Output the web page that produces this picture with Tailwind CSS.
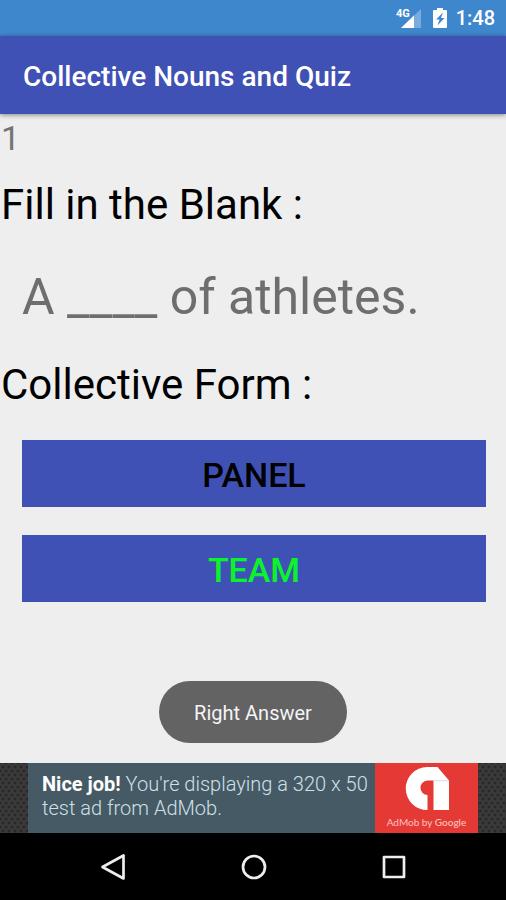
<!DOCTYPE html>
<html lang="en">
<head>
<meta charset="utf-8">
<meta name="viewport" content="width=device-width, initial-scale=1">
<title>Collective Nouns and Quiz</title>
<script src="https://cdn.jsdelivr.net/npm/@tailwindcss/browser@4"></script>
</head>
<body class="flex min-h-screen flex-col bg-[#eeeeee] font-['Roboto',sans-serif] text-black">
  <div class="flex h-9 items-center justify-end bg-[#3f87cd] pr-[11px] text-white">
    <svg class="h-7 w-7" viewBox="0 0 28 28" role="img" aria-label="4G signal">
      <path d="M25 5v19H5z" fill="#fff" fill-opacity=".3"/>
      <path d="M18 11.500V24H5z" fill="#fff"/>
      <text x="0" y="13" fill="#fff" font-family="Roboto" font-size="11" font-weight="700">4G</text>
    </svg>
    <svg class="ml-2 h-5 w-4" viewBox="0 0 16 20" role="img" aria-label="Battery charging">
      <path d="M5 0h6v2h3q1 0 1 1v16q0 1-1 1H2q-1 0-1-1V3q0-1 1-1h3z" fill="#fff"/>
      <path d="M11 4.500 4 11.500h3.500L5.500 17.500l7-7.500H9z" fill="#3f87cd"/>
    </svg>
    <time class="ml-2 text-[20px] leading-6 font-medium">1:48</time>
  </div>
  <header class="z-10 flex h-[78px] items-center bg-[#3f51b5] px-[23px] pt-[3px] shadow-[0_1px_5px_rgba(0,0,0,0.45)]">
    <h1 class="text-[28px] leading-8 font-medium text-white">Collective Nouns and Quiz</h1>
  </header>

  <main class="flex grow flex-col pt-1">
    <p class="px-px text-[34px] leading-10 text-[#757575]">1</p>
    <h2 class="mt-[22px] px-px text-[42px] leading-[50px]">Fill in the Blank :</h2>
    <p class="mt-[38px] mb-[34px] px-[22px] text-[50px] leading-[58px] text-[#6e6e6e]">A ____ of athletes.</p>
    <h2 class="px-px text-[42px] leading-[50px]">Collective Form :</h2>
    <div class="mt-[30px] flex flex-col gap-7 pr-5 pl-[22px]">
      <button type="button" class="h-[67px] bg-[#3f51b5] pt-0.5 text-[34px] leading-10 font-medium">PANEL</button>
      <button type="button" class="h-[67px] bg-[#3f51b5] pt-0.5 text-[34px] leading-10 font-medium text-[#0bf32b]">TEAM</button>
    </div>
    <div role="status" class="mt-auto mb-5 flex h-[62px] items-center self-center rounded-full bg-[#636363] px-[35px] pt-0.5 text-[20px] leading-6 text-[#f4f4f4]">Right Answer</div>
  </main>

  <aside class="flex h-[70px] justify-center bg-[#3a3a3a] bg-[radial-gradient(circle,#292929_1px,transparent_2px),radial-gradient(circle,#292929_1px,transparent_2px)] bg-[size:6px_8px] bg-[position:0_0,3px_4px]">
    <a href="#" class="flex w-[450px]">
      <p class="grow bg-[#455a64] pt-[9px] pl-[14px] text-[20px] leading-6 font-light text-[#cfe0e8]"><strong class="font-bold text-white">Nice job!</strong> You're displaying a 320 x 50<br>test ad from AdMob.</p>
      <div class="flex w-[103px] flex-col items-center bg-[#e53935] pt-[3px] text-[#ffc2bf]">
        <svg class="h-12 w-11" viewBox="0 0 44 48" aria-hidden="true">
          <path d="M22.500 44A21.300 21.300 0 0 1 22 1h10.500L44 14.500V44H28.500V14.500H23a7.300 7.300 0 0 0-.5 14.600z" fill="#fff"/>
          <path d="M28.500 14.800H44" stroke="#d8dcdc" stroke-width="1"/>
        </svg>
        <span class="font-['Lato',sans-serif] text-[10px] leading-4">AdMob by <span class="font-medium">Google</span></span>
      </div>
    </a>
  </aside>

  <nav aria-label="System" class="flex h-[67px] items-center justify-center gap-[100px] bg-black pl-0.5 text-[#eeeeee]">
    <button type="button" aria-label="Back" class="flex h-10 w-10 items-center justify-center">
      <svg class="h-7 w-7" viewBox="0 0 28 28" fill="none" stroke="currentColor" stroke-width="2.700" stroke-linejoin="round"><path d="M23.500 2.500v23L2.500 14z"/></svg>
    </button>
    <button type="button" aria-label="Home" class="flex h-10 w-10 items-center justify-center">
      <svg class="h-7 w-7" viewBox="0 0 28 28" fill="none" stroke="currentColor" stroke-width="2.700"><circle cx="14" cy="14" r="11"/></svg>
    </button>
    <button type="button" aria-label="Recent apps" class="flex h-10 w-10 items-center justify-center">
      <svg class="h-7 w-7" viewBox="0 0 28 28" fill="none" stroke="currentColor" stroke-width="2.700" stroke-linejoin="round"><path d="M4 4h20v20H4z"/></svg>
    </button>
  </nav>
</body>
</html>
